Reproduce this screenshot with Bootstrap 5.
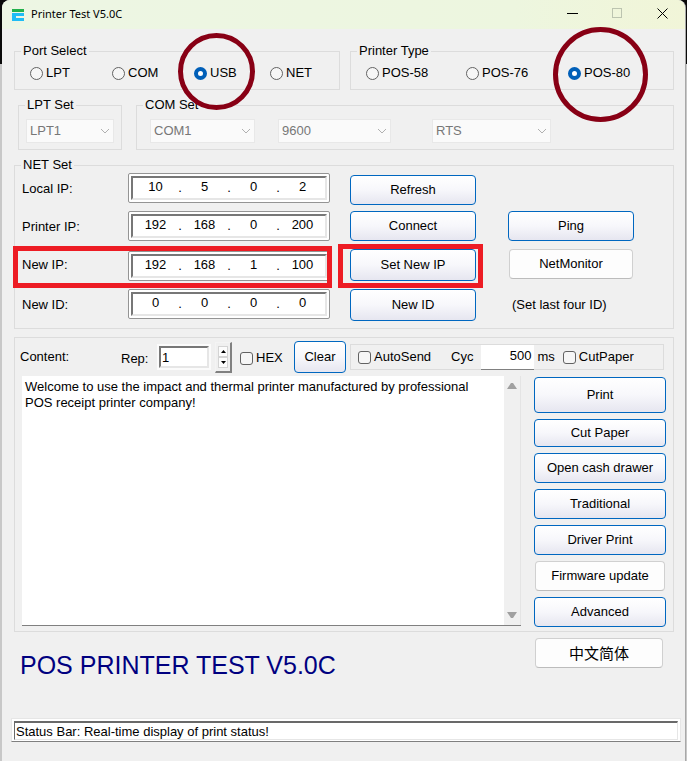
<!DOCTYPE html>
<html lang="en">
<head>
<meta charset="utf-8">
<meta name="viewport" content="width=device-width, initial-scale=1">
<title>Printer Test V5.0C</title>
<link href="https://cdn.jsdelivr.net/npm/bootstrap@5.3.0/dist/css/bootstrap.min.css" rel="stylesheet">
<style>
body{font:13px/16px "Liberation Sans",Arial,sans-serif;color:#000;background:linear-gradient(#0a0a0a 64px,#c8c8c8 64px)}
.app-window{margin:0 1px 0 2px;min-height:100vh;background:#f0f0f0;border-right:1px solid #a8a8a8;border-radius:8px 8px 0 0;overflow:hidden}
.title-bar{height:29px;background:linear-gradient(90deg,#edf6e4,#edf6df 75%,#f1f5d8);padding-left:10px;font:11px/16px "Noto Sans",sans-serif}
.title-bar span{margin-left:7px;padding-bottom:2px}
.title-bar button{width:45px;height:28px;border:0;background:none;padding:0 0 2px;display:flex;align-items:center;justify-content:center}
.app-body{padding:14px 11px 0 12px}
.group-box{border:1px solid #dcdcdc;padding:0 7px;min-width:0}
.group-box legend{float:none;width:auto;font-size:13px;line-height:16px;margin:0 -1px;padding:0 2px}
.top-row{display:grid;grid-template-columns:minmax(0,326fr) minmax(0,324fr);gap:10px}
.set-row{display:grid;grid-template-columns:minmax(0,104fr) minmax(0,538fr);margin:7px 0 7px 4px;gap:14px}
.opt{display:flex;align-items:center;gap:3px;position:relative;white-space:nowrap}
.opt input{appearance:none;width:13px;height:13px;margin:0;border:1px solid #626262;background:#f6f6f6;flex:none}
.opt input[type=radio]{border-radius:50%}
.opt input[type=checkbox]{border-radius:3px}
.opt input[type=radio]:checked{border:4px solid #005fb8;background:#fff}
.ring{position:absolute;border:5px solid #880015;border-radius:50%;pointer-events:none;z-index:2}
.ring-usb{width:77px;height:77px;left:-16px;top:-32px}
.ring-pos{width:95px;height:95px;left:-15px;top:-38px}
.port-opts{display:grid;grid-template-columns:82fr 82fr 76fr 62fr;padding:6px 0 8px 8px}
.type-opts{display:grid;grid-template-columns:100fr 102fr 98fr;padding:6px 0 8px 8px}
.combo{appearance:none;height:24px;border:1px solid #e8e8e8;background:#fafafa url("data:image/svg+xml,%3Csvg xmlns='http://www.w3.org/2000/svg' width='10' height='6'%3E%3Cpath d='M1 1l4 4 4-4' fill='none' stroke='%23b0b0b0'/%3E%3C/svg%3E") no-repeat right 3px center;color:#777;padding:0 3px;opacity:1;min-width:0;width:100%}
.lpt-combo{margin:6px 0}
.com-baud{grid-column:3}
.com-flow{grid-column:5}
.com-grid{display:grid;grid-template-columns:minmax(0,105fr) 23fr minmax(0,113fr) 41fr minmax(0,119fr) 115fr;padding:6px 0 6px 6px}
.net-grid{display:grid;grid-template-columns:minmax(0,106fr) minmax(0,202fr) 20fr minmax(0,126fr) 32fr minmax(0,126fr) 32fr;grid-template-rows:32px 32px 34px 32px;row-gap:6px;padding-bottom:7px}
.net-grid>label,.net-grid>.cell-label{align-self:start;padding-top:8px}
.ip-frame{align-self:start;height:30px;border:1px solid #949494;border-radius:2px;background:#fff;padding:2px}
.ip-frame>div{height:24px;border:2px solid;border-color:#777 #e6e6e6 #e6e6e6 #777;display:flex;align-items:center}
.ip-frame input{border:0;padding:0 0 3px;background:none;min-width:0;width:0;flex:1 1 0;text-align:center;height:20px;color:#000}
.ip-frame span{width:4px;text-align:center}
.mark-red{border:5px solid #ed1c24;pointer-events:none;z-index:2}
.mark-field{grid-area:3/1/4/3;margin:-3px -2px -5px -9px}
.mark-button{grid-area:3/4/4/5;margin:-5px -7px -5px -12px}
.push{height:30px;border:1px solid #0067c0;border-radius:4px;background:linear-gradient(#fff,#f7f7fb 50%,#e6e6f0);padding:0;color:#000;font-size:13px;line-height:16px;white-space:nowrap}
.push-plain{border-color:#d0d0d0 #d0d0d0 #bcbcbc;background:#fdfdfd;margin:0 1px}
.tall{height:32px}
.c1{grid-column:1}.c2{grid-column:2}.c4{grid-column:4}.c6{grid-column:6}
.r1{grid-row:1}.r2{grid-row:2}.r3{grid-row:3}.r4{grid-row:4}
.content-box{margin-top:8px;border:1px solid #dcdcdc;padding:3px 7px 4px}
.tool-row{height:32px;display:flex;align-items:center;margin:0 2px 0 -2px}
.content-label{width:101px}
.rep-label{width:38px;padding-top:4px}
.sunk{border:2px solid;border-color:#777 #e6e6e6 #e6e6e6 #777;background:#fff;padding:0 1px;color:#000;outline:2px solid #fbfbfb}
.rep{width:50px;height:22px}
.spin{width:17px;height:31px;border:1px solid;border-color:#f4f4f4 #808080 #808080 #f4f4f4;border-right-width:2px;border-bottom-width:2px;padding:3px 2px;margin-left:6px}
.spin button{flex:1;border:1px solid #d4d4d4;background:#fcfcfc;padding:0;display:flex;align-items:center;justify-content:center}
.hex-opt{margin:2px 0 0 8px;width:54px}
.clear-btn{width:52px;margin-right:4px}
.auto-box{border:1px solid #dcdcdc;height:26px;padding-left:7px}
.cyc-label{margin:0 7px 0 20px}
.cyc{width:53px;height:25px;border:0;border-bottom:1px solid #808080;text-align:right;padding:0 2px 3px;background:#fff;color:#000}
.work-row{gap:13px;padding-top:3px}
.memo{border-bottom:1px solid #808080;background:#fff;height:250px}
.memo textarea{border:0;resize:none;outline:0;padding:3px 12px 3px 3px;color:#000;overflow:hidden;background:#fff}
.scroll-track{width:17px;background:#f0f0f0;border-right:1px solid #e4e4e4;padding:7px 0}
.side{width:132px;gap:6px;padding-top:1px}
.print-btn{height:36px}
.cut-btn{height:28px}
.foot-row{padding-top:6px}
.banner{font-size:25px;line-height:30px;color:#000080;padding:12px 0 0 6px;margin:0;font-weight:400}
.lang-btn{width:128px;margin-right:11px;font:15px/20px "Noto Sans CJK SC",sans-serif}
.status{height:24px;border:1px solid;border-color:#e6e6e6 #e6e6e6 #808080;background:#fff;padding:2px;margin:38px -7px 0 -3px}
.status input{display:block;width:100%;height:19px;border:1px solid;border-color:#696969 #e6e6e6 #e6e6e6 #696969;border-top-width:2px;padding:0 1px;color:#000;background:#fff}
</style>
</head>
<body>
<div class="app-window">
  <header class="title-bar d-flex align-items-center">
    <svg width="12" height="12" viewBox="0 0 12 12" aria-hidden="true"><path d="M0 0h12v3H0z" fill="#22b14c"/><path d="M0 4h12v3H4v2h8v3H0z" fill="#1fbcf5"/></svg>
    <span class="me-auto">Printer Test V5.0C</span>
    <button type="button" aria-label="Minimize"><svg width="11" height="11"><path d="M0 5.500h11" stroke="#000"/></svg></button>
    <button type="button" aria-label="Maximize" disabled><svg width="11" height="11"><rect x=".5" y=".5" width="9" height="9" fill="none" stroke="#bcc4b0"/></svg></button>
    <button type="button" aria-label="Close"><svg width="11" height="11"><path d="M.5.5l10 10M10.500.5l-10 10" stroke="#000"/></svg></button>
  </header>
  <main class="app-body">
    <div class="top-row">
      <fieldset class="group-box">
        <legend>Port Select</legend>
        <div class="port-opts">
          <label class="opt"><input type="radio" name="port">LPT</label>
          <label class="opt"><input type="radio" name="port">COM</label>
          <label class="opt"><input type="radio" name="port" checked>USB<span class="ring ring-usb"></span></label>
          <label class="opt"><input type="radio" name="port">NET</label>
        </div>
      </fieldset>
      <fieldset class="group-box">
        <legend>Printer Type</legend>
        <div class="type-opts">
          <label class="opt"><input type="radio" name="ptype">POS-58</label>
          <label class="opt"><input type="radio" name="ptype">POS-76</label>
          <label class="opt"><input type="radio" name="ptype" checked>POS-80<span class="ring ring-pos"></span></label>
        </div>
      </fieldset>
    </div>
    <div class="set-row">
      <fieldset class="group-box">
        <legend>LPT Set</legend>
        <select class="combo lpt-combo" aria-label="LPT port" disabled><option>LPT1</option></select>
      </fieldset>
      <fieldset class="group-box">
        <legend>COM Set</legend>
        <div class="com-grid">
          <select class="combo c1" aria-label="COM port" disabled><option>COM1</option></select>
          <select class="combo com-baud" aria-label="Baud rate" disabled><option>9600</option></select>
          <select class="combo com-flow" aria-label="Flow control" disabled><option>RTS</option></select>
        </div>
      </fieldset>
    </div>
    <fieldset class="group-box">
      <legend>NET Set</legend>
      <div class="net-grid">
        <label class="c1 r1" for="lip">Local IP:</label>
        <div class="ip-frame c2 r1"><div><input id="lip" value="10"><span>.</span><input aria-label="Local IP 2" value="5"><span>.</span><input aria-label="Local IP 3" value="0"><span>.</span><input aria-label="Local IP 4" value="2"></div></div>
        <button type="button" class="push c4 r1 align-self-end">Refresh</button>
        <label class="c1 r2" for="pip">Printer IP:</label>
        <div class="ip-frame c2 r2"><div><input id="pip" value="192"><span>.</span><input aria-label="Printer IP 2" value="168"><span>.</span><input aria-label="Printer IP 3" value="0"><span>.</span><input aria-label="Printer IP 4" value="200"></div></div>
        <button type="button" class="push c4 r2">Connect</button>
        <button type="button" class="push c6 r2">Ping</button>
        <label class="c1 r3" for="nip">New IP:</label>
        <div class="ip-frame c2 r3 align-self-center"><div><input id="nip" value="192"><span>.</span><input aria-label="New IP 2" value="168"><span>.</span><input aria-label="New IP 3" value="1"><span>.</span><input aria-label="New IP 4" value="100"></div></div>
        <button type="button" class="push tall c4 r3">Set New IP</button>
        <button type="button" class="push push-plain c6 r3 align-self-start mt-1px">NetMonitor</button>
        <label class="c1 r4" for="nid">New ID:</label>
        <div class="ip-frame c2 r4"><div><input id="nid" value="0"><span>.</span><input aria-label="New ID 2" value="0"><span>.</span><input aria-label="New ID 3" value="0"><span>.</span><input aria-label="New ID 4" value="0"></div></div>
        <button type="button" class="push tall c4 r4">New ID</button>
        <span class="cell-label c6 r4 ps-1">(Set last four ID)</span>
        <div class="mark-red mark-field"></div>
        <div class="mark-red mark-button"></div>
      </div>
    </fieldset>
    <section class="content-box">
      <div class="tool-row">
        <label for="memo" class="content-label">Content:</label>
        <label for="rep" class="rep-label">Rep:</label>
        <input id="rep" class="sunk rep" value="1">
        <div class="spin d-flex flex-column">
          <button type="button" aria-label="Increase"><svg width="5" height="3"><path d="M0 3h5L2.500 0z"/></svg></button>
          <button type="button" aria-label="Decrease"><svg width="5" height="3"><path d="M0 0h5L2.500 3z"/></svg></button>
        </div>
        <label class="opt hex-opt"><input type="checkbox">HEX</label>
        <button type="button" class="push tall clear-btn">Clear</button>
        <div class="auto-box d-flex align-items-center flex-grow-1">
          <label class="opt"><input type="checkbox">AutoSend</label>
          <label for="cyc" class="cyc-label">Cyc</label>
          <input id="cyc" class="cyc" value="500">
          <span class="ms-1 me-2">ms</span>
          <label class="opt"><input type="checkbox">CutPaper</label>
        </div>
      </div>
      <div class="d-flex work-row">
        <div class="memo d-flex flex-grow-1">
          <textarea id="memo" class="flex-grow-1">Welcome to use the impact and thermal printer manufactured by professional POS receipt printer company!</textarea>
          <div class="scroll-track d-flex flex-column align-items-center justify-content-between" aria-hidden="true">
            <svg width="10" height="6"><path d="M0 6L4 0h2l4 6z" fill="#a0a0a0"/></svg>
            <svg width="10" height="6"><path d="M0 0h10L6 6H4z" fill="#a0a0a0"/></svg>
          </div>
        </div>
        <div class="side d-flex flex-column">
          <button type="button" class="push print-btn">Print</button>
          <button type="button" class="push cut-btn">Cut Paper</button>
          <button type="button" class="push">Open cash drawer</button>
          <button type="button" class="push">Traditional</button>
          <button type="button" class="push">Driver Print</button>
          <button type="button" class="push push-plain">Firmware update</button>
          <button type="button" class="push">Advanced</button>
        </div>
      </div>
    </section>
    <div class="d-flex justify-content-between align-items-start foot-row">
      <h1 class="banner">POS PRINTER TEST V5.0C</h1>
      <button type="button" class="push push-plain lang-btn" lang="zh-CN">中文简体</button>
    </div>
    <div class="status"><input aria-label="Status" readonly value="Status Bar: Real-time display of print status!"></div>
  </main>
</div>
<script src="https://cdn.jsdelivr.net/npm/bootstrap@5.3.0/dist/js/bootstrap.bundle.min.js"></script>
</body>
</html>
